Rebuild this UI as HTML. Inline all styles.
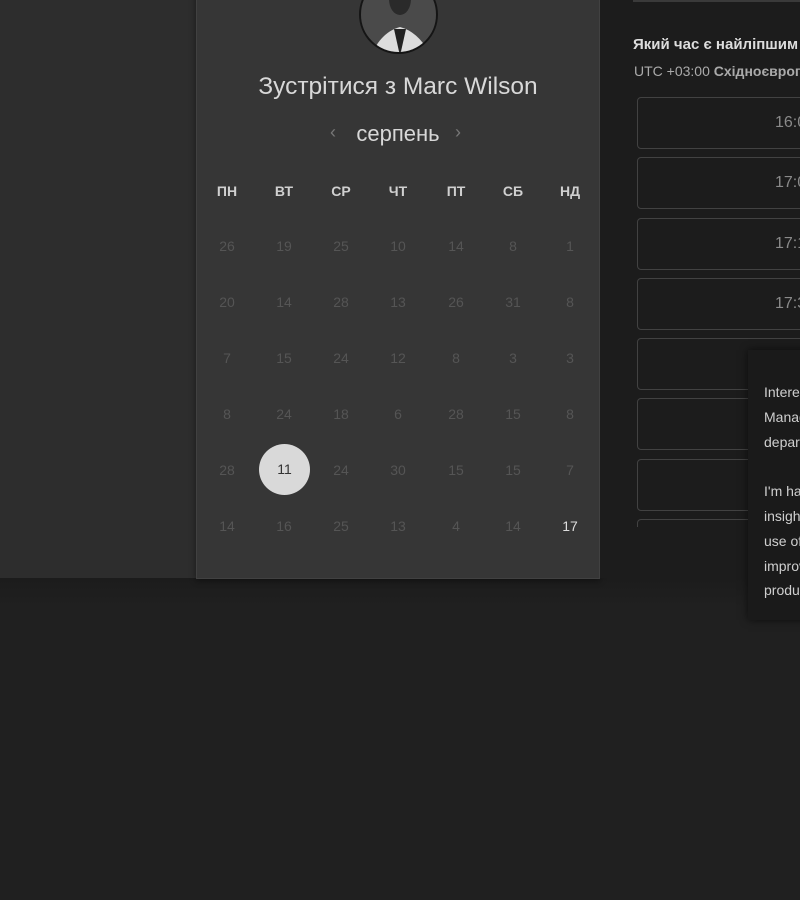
<!DOCTYPE html>
<html><head><meta charset="utf-8"><style>
*{margin:0;padding:0;box-sizing:border-box}
body{width:800px;height:900px;overflow:hidden;background:#202020;position:relative;font-family:"Liberation Sans",sans-serif}
.top{position:absolute;left:0;top:0;width:800px;height:580px;background:#2d2d2d}
.shadow{position:absolute;left:0;top:578px;width:800px;height:30px;background:linear-gradient(#1c1c1c,#202020)}
.card{position:absolute;left:196px;top:-10px;width:404px;height:589px;background:#363636;border:1px solid #414141;box-shadow:0 2px 6px rgba(0,0,0,.4)}
.right{position:absolute;left:600px;top:0;width:200px;height:578px;background:#1c1c1c;overflow:hidden}
.av{position:absolute;left:359px;top:-25px;width:79px;height:79px;border-radius:50%;background:#4a4a4a;border:2px solid #151515;overflow:hidden}
.t{position:absolute;color:#d8d8d8;text-align:center}
.n{position:absolute;width:40px;margin-left:-20px;text-align:center;font-size:14px;color:#555}
.h{position:absolute;width:40px;margin-left:-20px;text-align:center;font-size:14px;font-weight:bold;color:#d0d0d0}
.slot{position:absolute;left:37px;width:300px;height:52px;border:1px solid #424242;border-radius:4px}
.slot span{position:absolute;left:137px;top:16px;font-size:16px;color:#8a8a8a}
.tip{position:absolute;left:748px;top:350px;width:100px;height:270px;background:#1a1a1a;box-shadow:0 0 8px rgba(0,0,0,.6);color:#cfcfcf;font-size:14px;line-height:24.8px;padding:30px 0 0 16px;white-space:nowrap;overflow:hidden}
</style></head><body>
<div class="top"></div><div class="shadow"></div>
<div class="card"></div>
<div class="av">
<svg width="79" height="79"><ellipse cx="39" cy="22" rx="11" ry="16" fill="#2a2a2a"/><path d="M28 10 Q39 -4 50 10 L49 18 Q39 10 29 18Z" fill="#ddd"/><path d="M10 79 Q20 55 39 50 Q58 55 70 79Z" fill="#ddd"/><path d="M33 52 L39 79 L45 52Z" fill="#222"/></svg>
</div>
<div class="t" style="left:196px;width:404px;top:73px;font-size:24.5px">Зустрітися з Marc Wilson</div>
<div class="t" style="left:196px;width:404px;top:121px;font-size:22px">серпень</div>
<div class="t" style="left:330px;top:122px;font-size:18px;color:#777">‹</div>
<div class="t" style="left:455px;top:122px;font-size:18px;color:#777">›</div>
<div class="h" style="left:227px;top:183px">ПН</div><div class="h" style="left:284px;top:183px">ВТ</div><div class="h" style="left:341px;top:183px">СР</div><div class="h" style="left:398px;top:183px">ЧТ</div><div class="h" style="left:456px;top:183px">ПТ</div><div class="h" style="left:513px;top:183px">СБ</div><div class="h" style="left:570px;top:183px">НД</div>
<div id="g"></div>
<div style="position:absolute;left:259px;top:444px;width:51px;height:51px;border-radius:50%;background:#d9d9d9;color:#333;font-size:14px;text-align:center;line-height:50px">11</div>
<div class="right">
<div style="position:absolute;left:33px;top:0;width:200px;height:2px;background:#3a3a3a"></div>
<div style="position:absolute;left:33px;top:36px;font-size:15px;font-weight:bold;color:#ddd;white-space:nowrap">Який час є найліпшим</div>
<div style="position:absolute;left:34px;top:63px;font-size:14px;color:#aaa;white-space:nowrap">UTC +03:00 <b>Східноєвропейський</b></div>
<div class="slot" style="top:97px"><span>16:00</span></div>
<div class="slot" style="top:157px"><span>17:00</span></div>
<div class="slot" style="top:218px"><span>17:15</span></div>
<div class="slot" style="top:278px"><span>17:30</span></div>
<div class="slot" style="top:338px"></div>
<div class="slot" style="top:398px"></div>
<div class="slot" style="top:459px"></div>
<div style="position:absolute;left:0;top:527px;width:200px;height:51px;background:#1c1c1c"></div>
<div class="slot" style="top:519px;height:8px;border-bottom:none;border-radius:4px 4px 0 0"></div>
</div>
<div class="tip">Interested<br>Manager<br>department<br><br>I'm happy<br>insights<br>use of<br>improve<br>product</div>
<script>
var d=[[26,19,25,10,14,8,1],[20,14,28,13,26,31,8],[7,15,24,12,8,3,3],[8,24,18,6,28,15,8],[28,0,24,30,15,15,7],[14,16,25,13,4,14,17]];
var xs=[227,284,341,398,456,513,570],h='';
for(var r=0;r<6;r++)for(var c=0;c<7;c++){if(!d[r][c])continue;var st=(r==5&&c==6)?';color:#ddd':'';h+='<div class="n" style="left:'+xs[c]+'px;top:'+(238+r*56)+'px'+st+'">'+d[r][c]+'</div>';}
document.getElementById('g').innerHTML=h;
</script>
</body></html>
